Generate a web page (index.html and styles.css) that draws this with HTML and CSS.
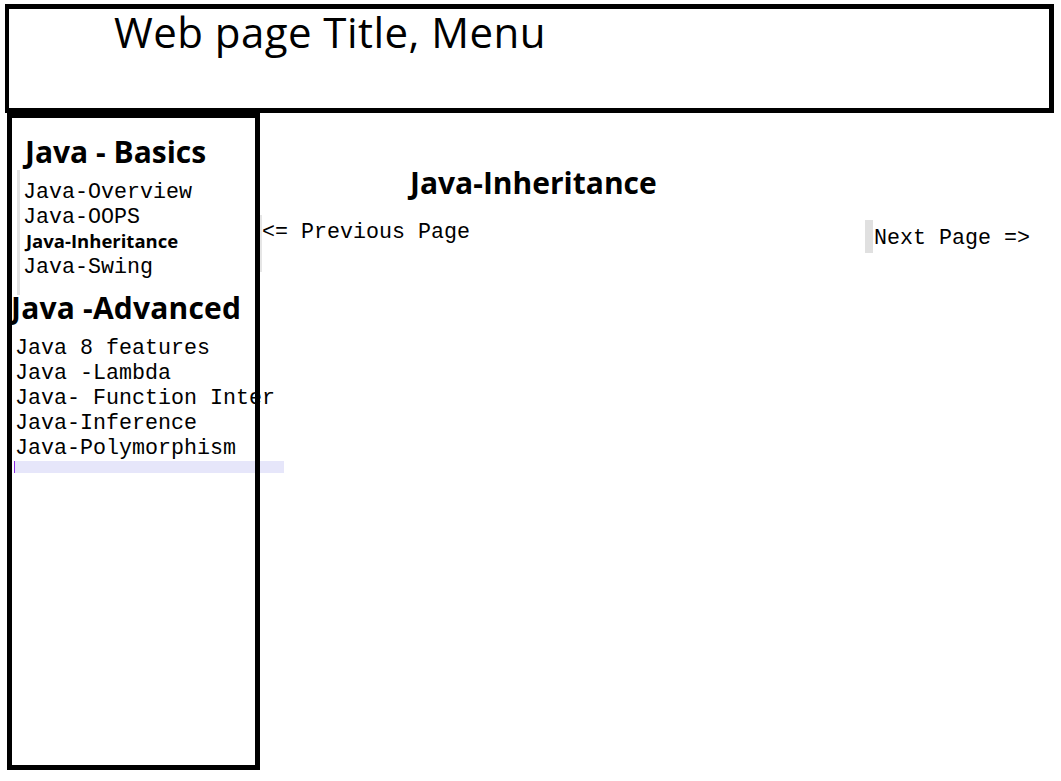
FILE: index.html
```html
<!DOCTYPE html>
<html lang="en">
<head>
<meta charset="utf-8">
<title>Java Tutorial</title>
<link rel="stylesheet" href="styles.css">
</head>
<body>
<header class="topbar">
  <h1 class="site-title">Web page Title, Menu</h1>
</header>
<div class="layout">
  <aside class="sidebar">
    <h2 class="group-title basics-title">Java - Basics</h2>
    <ul class="nav basics-nav">
      <li>Java-Overview</li>
      <li>Java-OOPS</li>
      <li class="active">Java-Inheritance</li>
      <li>Java-Swing</li>
    </ul>
    <h2 class="group-title advanced-title">Java -Advanced</h2>
    <ul class="nav advanced-nav">
      <li>Java 8 features</li>
      <li>Java -Lambda</li>
      <li>Java- Function Inter</li>
      <li>Java-Inference</li>
      <li>Java-Polymorphism</li>
    </ul>
    <div class="cursor-row"></div>
  </aside>
  <main class="content">
    <h2 class="page-title">Java-Inheritance</h2>
    <div class="pager">
      <span class="pager-link prev">&lt;= Previous Page</span>
      <span class="pager-link next">Next Page =&gt;</span>
    </div>
  </main>
</div>
</body>
</html>
```

FILE: styles.css
```css
* { box-sizing: border-box; }

html, body {
  margin: 0;
  padding: 0;
  background: #ffffff;
  color: #000000;
}

body {
  width: 1061px;
  height: 781px;
  overflow: hidden;
  font-family: "Open Sans", "Lato", sans-serif;
}

.topbar {
  margin: 4px 7px 0 5px;
  height: 109px;
  border: 5px solid #000;
  border-left-width: 4px;
}

.site-title {
  margin: 0;
  padding-left: 105px;
  padding-top: 1px;
  font-family: "Open Sans", sans-serif;
  font-weight: 400;
  font-size: 42px;
  line-height: 44px;
  letter-spacing: 0.45px;
}

.layout {
  display: flex;
  align-items: flex-start;
}

.sidebar {
  position: relative;
  flex: 0 0 253px;
  width: 253px;
  height: 657px;
  margin-left: 7px;
  padding: 5px;
}

.sidebar::after {
  content: "";
  position: absolute;
  inset: 0;
  border: 5px solid #000;
  pointer-events: none;
}

.group-title {
  margin: 0;
  font-family: "Open Sans", sans-serif;
  font-weight: 700;
  font-size: 30px;
  line-height: 30px;
  white-space: nowrap;
}

.basics-title {
  margin-top: 19px;
  margin-left: 13px;
}

.advanced-title {
  margin-top: -2px;
  margin-left: -1px;
  letter-spacing: 0.2px;
}

.nav {
  list-style: none;
  margin: 0;
  padding: 0;
  font-family: "Liberation Mono", "Courier New", monospace;
  font-size: 21.67px;
  line-height: 25px;
  white-space: nowrap;
}

.basics-nav {
  margin-left: 5px;
  margin-top: 3px;
  padding: 10px 0 15px 3px;
  border-left: 3px solid #e2e2e2;
}

.basics-nav .active {
  font-family: "Open Sans", sans-serif;
  font-weight: 700;
  font-size: 18.5px;
  line-height: 21px;
  padding-left: 3px;
  padding-bottom: 4px;
}

.advanced-nav {
  margin-top: 13px;
  margin-left: 3px;
}

.cursor-row {
  width: 270px;
  height: 12px;
  margin-left: 2px;
  background: #e6e6fa;
  border-left: 1px solid #8a2be2;
}

.content {
  flex: 1;
  padding-top: 55px;
}

.page-title {
  margin: 0 0 0 150px;
  font-family: "Open Sans", sans-serif;
  font-weight: 700;
  font-size: 30px;
  line-height: 30px;
}

.pager {
  display: flex;
  justify-content: space-between;
  align-items: flex-start;
  margin-top: 17px;
  padding-right: 31px;
  font-family: "Liberation Mono", "Courier New", monospace;
  font-size: 21.67px;
  white-space: nowrap;
}

.pager-link {
  display: block;
}

.prev {
  height: 57px;
  padding: 5px 0 0 0;
  line-height: 25px;
  border-left: 2px solid #e6e6e6;
}

.next {
  margin-top: 5px;
  height: 33px;
  padding: 4px 0 0 1px;
  line-height: 29px;
  border-left: 8px solid #e0e0e0;
}
```
